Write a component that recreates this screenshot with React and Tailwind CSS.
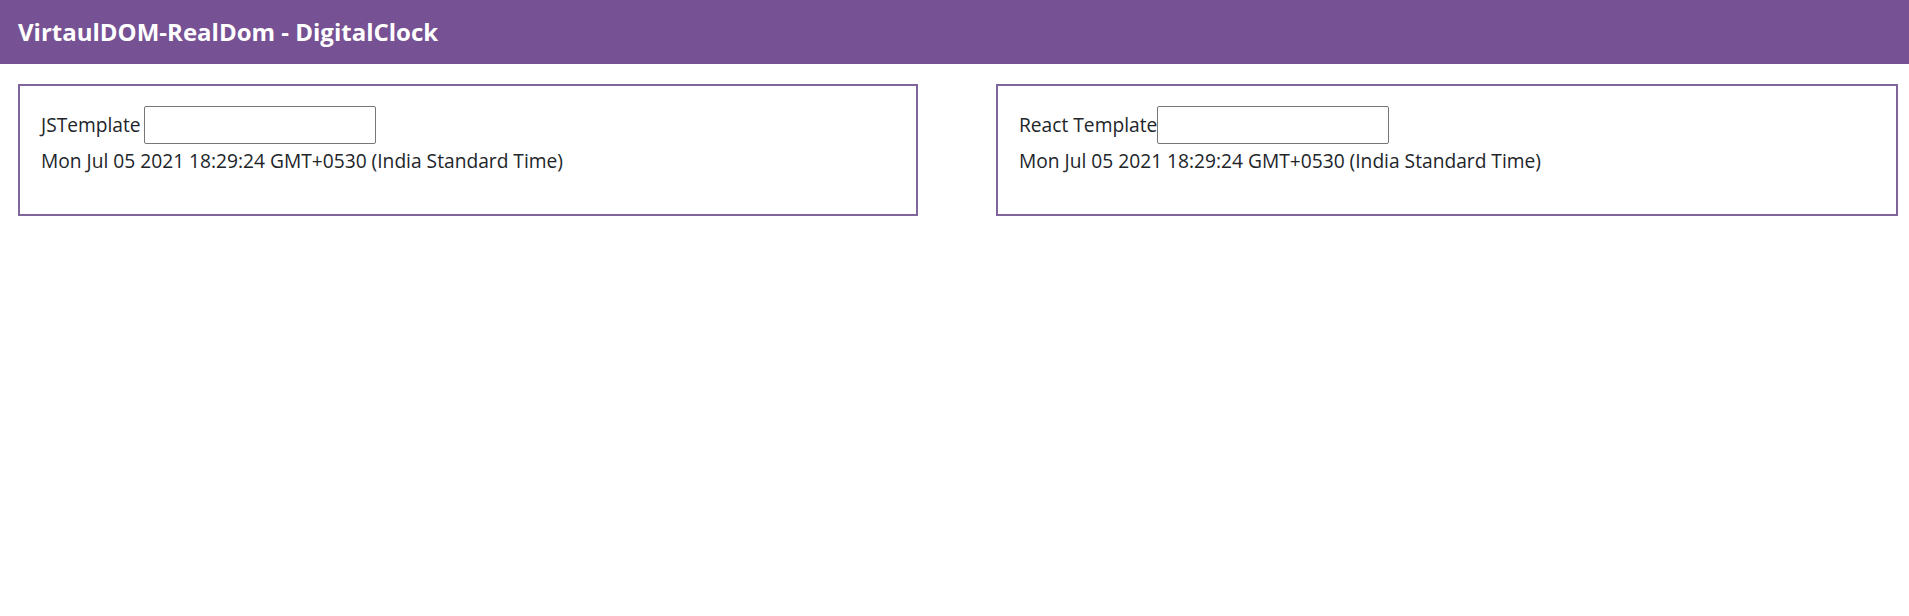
import React from 'react';

const DATE_TEXT = 'Mon Jul 05 2021 18:29:24 GMT+0530 (India Standard Time)';

const ClockBox = ({ label, spaced, className }) => (
    <div className={`h-[132px] border-2 border-[#80659b] pt-[20px] pl-[21px] ${className}`}>
        <div className="flex items-center h-[38px]">
            <span>{label}</span>
            <input
                type="text"
                className={`h-[38px] w-[232px] border border-[#767676] rounded-[2px] bg-white ${spaced ? 'ml-[3px]' : ''}`}
            />
        </div>
        <div className="mt-[3px] leading-[28px]">{DATE_TEXT}</div>
    </div>
);

export default function App() {
    return (
        <div className="min-h-screen bg-white text-[#212529] text-[19.2px]" style={{ fontFamily: '"Open Sans", "Noto Sans", sans-serif' }}>
            <header className="h-[64px] bg-[#765193] flex items-center px-[18px]">
                <h1 className="text-white font-bold text-[24px]">VirtaulDOM-RealDom - DigitalClock</h1>
            </header>
            <main className="flex pt-[20px] pl-[18px] gap-[78px]">
                <ClockBox label="JSTemplate" spaced className="w-[900px]" />
                <ClockBox label="React Template" className="w-[902px]" />
            </main>
        </div>
    );
}
